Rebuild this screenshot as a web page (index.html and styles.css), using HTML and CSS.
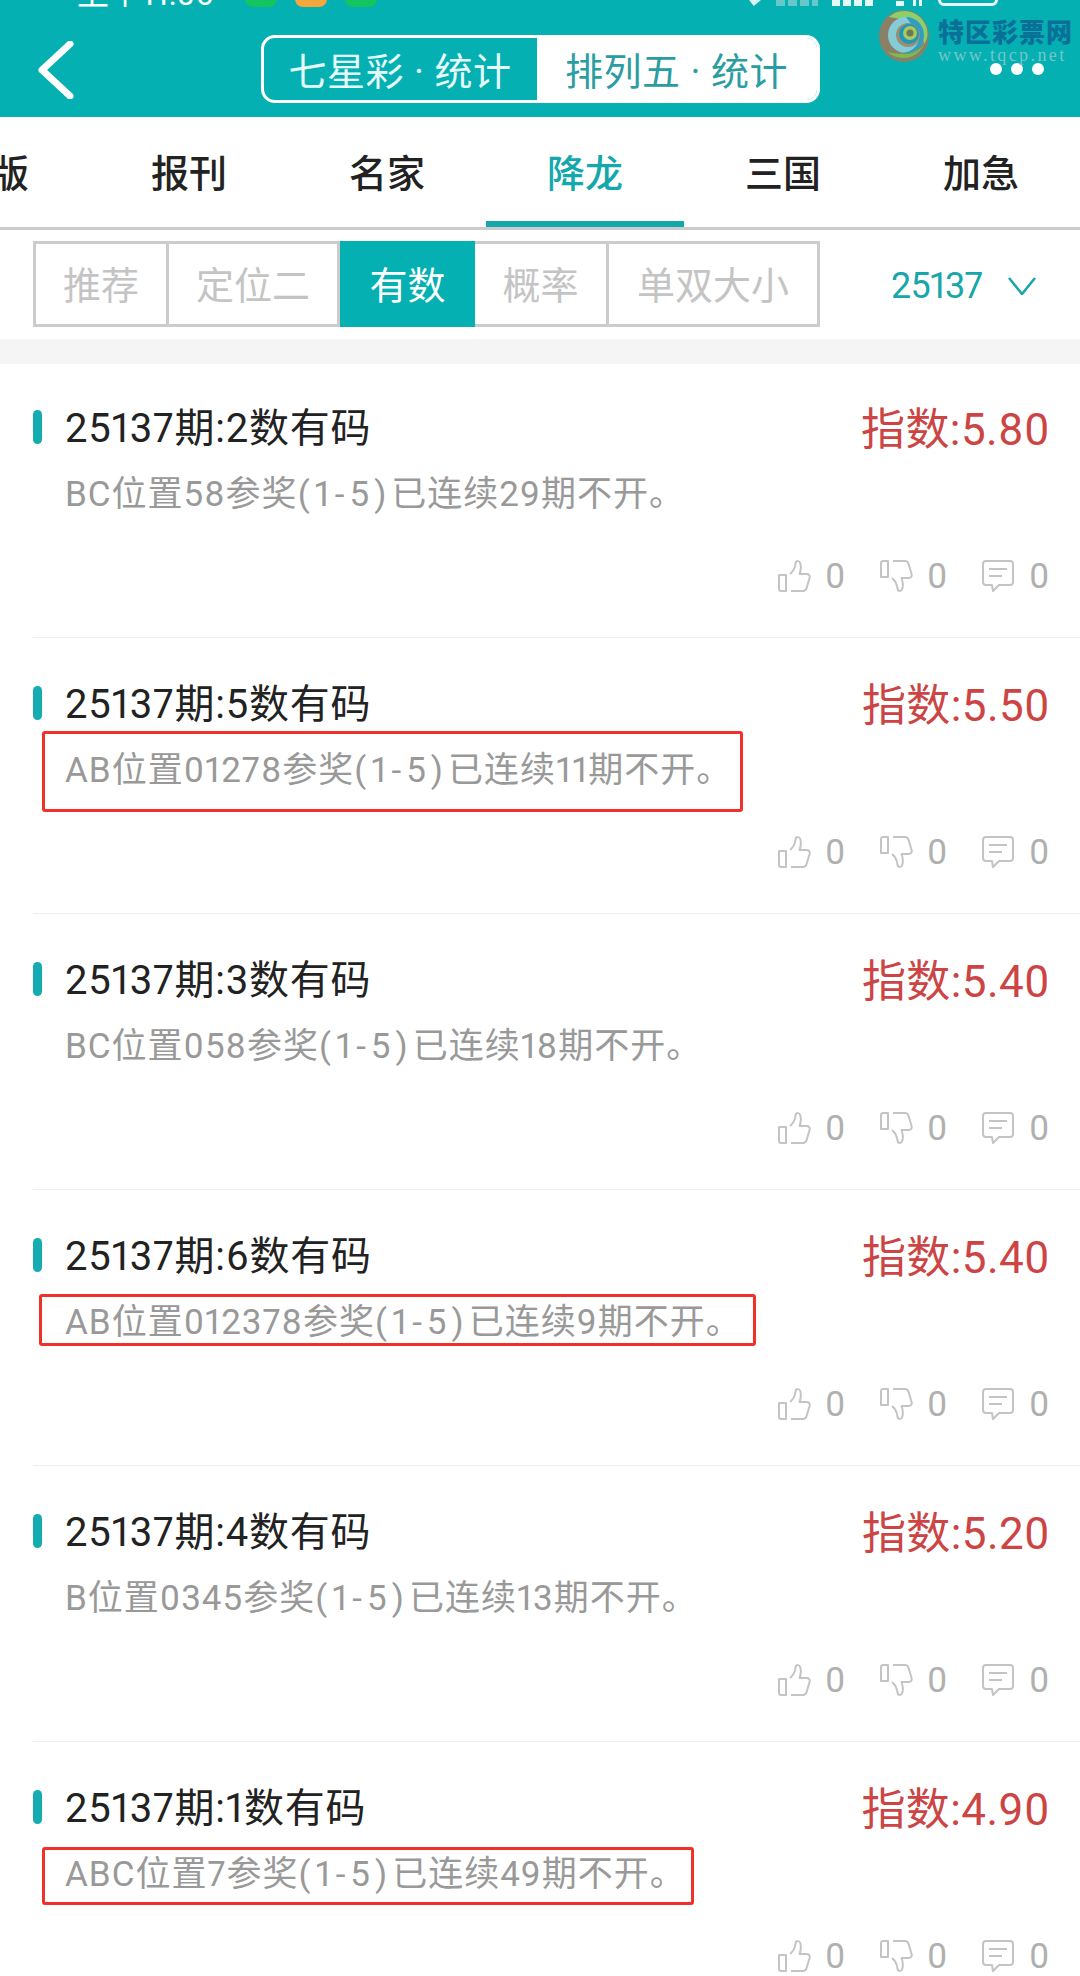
FILE: index.html
```html
<!DOCTYPE html>
<html lang="zh">

<head>
  <meta charset="UTF-8">
  <title>降龙 - 有数</title>
  <link rel="stylesheet" href="styles.css">
</head>

<body>

  <svg class="defs" width="0" height="0">
    <symbol id="icoLike" viewBox="0 0 34 34">
      <path d="M2 16h7v16H4a2 2 0 0 1-2-2z" />
      <path d="M14 32h12c2 0 3-1 3.600-3l3-10c.6-2.400-.8-4-3-4h-7c1.400-4 1.600-8 .6-11-.8-2.400-4.200-2.600-4.600 0-.4 4-2 8-5.600 11" />
    </symbol>
    <symbol id="icoComment" viewBox="0 0 34 34">
      <path d="M5 2h24a3 3 0 0 1 3 3v18a3 3 0 0 1-3 3H18l-6 6-1-6H5a3 3 0 0 1-3-3V5a3 3 0 0 1 3-3z" />
      <path d="M8 10h18M8 17h13" />
    </symbol>
    <symbol id="icoThumbDown" viewBox="0 0 34 34">
      <g transform="matrix(1 0 0 -1 0 34)">
        <use href="#icoLike" width="34" height="34" />
      </g>
    </symbol>
  </svg>

  <div id="root">
    <header class="top">
      <div class="status">
        <span class="time">上午11:06</span>
        <i class="app-dot green"></i>
        <i class="app-dot orange"></i>
        <i class="app-dot green"></i>
        <span class="status-right">
          <i class="st-nav"></i>
          <i class="st-dim"></i>
          <i class="st-bars"></i>
          <i class="st-wifi"></i>
          <i class="st-batt"></i>
        </span>
      </div>
      <nav class="nav">
        <svg class="back" viewBox="0 0 38 58">
          <path d="M33 3 5 29l28 26" />
        </svg>
        <div class="switch">
          <div class="switch-on">七星彩 · 统计</div>
          <div class="switch-off">排列五 · 统计</div>
        </div>
        <div class="more"><i></i><i></i><i></i></div>
      </nav>
      <!-- 水印 -->
      <div class="logo">
        <svg class="logo-mark" viewBox="0 0 50 52">
          <ellipse cx="25" cy="26" rx="25" ry="26" fill="#8a8068" />
          <path d="M10 7C20-3 40-1 47 16 50 24 48 30 45 34 44 20 34 10 22 9z" fill="#8fcf6a" />
          <path d="M8 42c12 10 32 8 38-10-3 6-10 12-20 12-7 0-13-1-18-2z" fill="#7dbb4e" />
          <circle cx="27" cy="25" r="18" fill="#86ccd6" />
          <path d="M27 7c10 0 18 8 18 18 0 12-10 20-22 18 12-1 18-10 17-18z" fill="#2f9fc0" />
          <circle cx="29" cy="25" r="12" fill="#9a8f70" />
          <circle cx="30" cy="24" r="10" fill="#1f97b8" />
          <circle cx="31" cy="23" r="7" fill="#a8c860" />
          <circle cx="31" cy="23" r="3.500" fill="#6b7a55" />
        </svg>
        <div class="logo-text">
          <b>特区彩票网</b>
          <span>www.tqcp.net</span>
        </div>
      </div>
    </header>

    <div class="tabs">
      <div class="tab">图版</div>
      <div class="tab">报刊</div>
      <div class="tab">名家</div>
      <div class="tab active">降龙</div>
      <div class="tab">三国</div>
      <div class="tab">加急</div>
    </div>

    <div class="filter">
      <div class="seg">
        <div class="seg-a">推荐</div>
        <div class="seg-b">定位二</div>
        <div class="seg-c active">有数</div>
        <div class="seg-d">概率</div>
        <div class="seg-e">单双大小</div>
      </div>
      <div class="period">
        <span>25137</span>
        <svg viewBox="0 0 28 18">
          <path d="M1 1l13 16L27 1" />
        </svg>
      </div>
    </div>

    <div class="strip"></div>

    <section class="list">
      <article class="row">
        <div class="head">
          <h3>25137期:2数有码</h3>
          <strong>指数:5.80</strong>
        </div>
        <p class="desc">BC位置58参奖<span>(1-5)</span>已连续29期不开。</p>
        <div class="acts">
          <svg><use href="#icoLike" /></svg><span>0</span>
          <svg><use href="#icoThumbDown" /></svg><span>0</span>
          <svg><use href="#icoComment" /></svg><span>0</span>
        </div>
      </article>

      <article class="row">
        <div class="head">
          <h3>25137期:5数有码</h3>
          <strong>指数:5.50</strong>
        </div>
        <p class="desc">AB位置01278参奖<span>(1-5)</span>已连续11期不开。</p>
        <div class="acts">
          <svg><use href="#icoLike" /></svg><span>0</span>
          <svg><use href="#icoThumbDown" /></svg><span>0</span>
          <svg><use href="#icoComment" /></svg><span>0</span>
        </div>
        <div class="redbox box-a"></div>
      </article>

      <article class="row">
        <div class="head">
          <h3>25137期:3数有码</h3>
          <strong>指数:5.40</strong>
        </div>
        <p class="desc">BC位置058参奖<span>(1-5)</span>已连续18期不开。</p>
        <div class="acts">
          <svg><use href="#icoLike" /></svg><span>0</span>
          <svg><use href="#icoThumbDown" /></svg><span>0</span>
          <svg><use href="#icoComment" /></svg><span>0</span>
        </div>
      </article>

      <article class="row">
        <div class="head">
          <h3>25137期:6数有码</h3>
          <strong>指数:5.40</strong>
        </div>
        <p class="desc">AB位置012378参奖<span>(1-5)</span>已连续9期不开。</p>
        <div class="acts">
          <svg><use href="#icoLike" /></svg><span>0</span>
          <svg><use href="#icoThumbDown" /></svg><span>0</span>
          <svg><use href="#icoComment" /></svg><span>0</span>
        </div>
        <div class="redbox box-b"></div>
      </article>

      <article class="row">
        <div class="head">
          <h3>25137期:4数有码</h3>
          <strong>指数:5.20</strong>
        </div>
        <p class="desc">B位置0345参奖<span>(1-5)</span>已连续13期不开。</p>
        <div class="acts">
          <svg><use href="#icoLike" /></svg><span>0</span>
          <svg><use href="#icoThumbDown" /></svg><span>0</span>
          <svg><use href="#icoComment" /></svg><span>0</span>
        </div>
      </article>

      <article class="row">
        <div class="head">
          <h3>25137期:1数有码</h3>
          <strong>指数:4.90</strong>
        </div>
        <p class="desc">ABC位置7参奖<span>(1-5)</span>已连续49期不开。</p>
        <div class="acts">
          <svg><use href="#icoLike" /></svg><span>0</span>
          <svg><use href="#icoThumbDown" /></svg><span>0</span>
          <svg><use href="#icoComment" /></svg><span>0</span>
        </div>
        <div class="redbox box-c"></div>
      </article>
    </section>
  </div>

</body>

</html>
```

FILE: styles.css
```css
* {
  box-sizing: border-box;
}

html,
body {
  margin: 0;
  height: 1976px;
  overflow: hidden;
  background-color: #fff;
}

body {
  font-family: Roboto, "Noto Sans CJK SC", sans-serif;
  font-variant-numeric: proportional-nums;
}

.defs {
  position: absolute;
}

#root {
  width: 1080px;
  height: 1976px;
  overflow: hidden;
}

/* 顶部 */
.top {
  position: relative;
  height: 117px;
  background-color: #05b0b3;
}

.status {
  display: flex;
  align-items: flex-end;
  height: 7px;
  padding-left: 77px;
  overflow: hidden;
  color: #fff;
}

.time {
  width: 168px;
  flex: none;
  font-size: 32px;
  line-height: 26px;
}

.app-dot {
  flex: none;
  width: 32px;
  height: 24px;
  margin-right: 18px;
  border-radius: 8px;
}

.app-dot.green {
  background-color: #13c45f;
}

.app-dot.orange {
  background-color: #f5a63c;
}

.status-right {
  display: flex;
  align-items: flex-end;
  margin-left: auto;
  margin-right: 82px;
  padding-bottom: 1px;
}

.status-right i {
  display: block;
  flex: none;
  height: 20px;
}

.st-nav {
  width: 12px;
  margin-right: 15px;
  background-color: #d8f4f4;
  clip-path: polygon(0 70%, 100% 70%, 40% 100%);
}

.st-dim {
  width: 42px;
  margin-right: 14px;
  background: repeating-linear-gradient(90deg, #66c8ca 0 9px, transparent 9px 12px);
}

.st-bars {
  width: 42px;
  margin-right: 22px;
  background: repeating-linear-gradient(90deg, #e6f8f8 0 8px, transparent 8px 11px);
}

.st-wifi {
  width: 28px;
  margin-right: 14px;
  background:
    linear-gradient(#e6f8f8, #e6f8f8) 0 100% / 8px 5px no-repeat,
    linear-gradient(#e6f8f8, #e6f8f8) 17px 100% / 3px 20px no-repeat,
    linear-gradient(#e6f8f8, #e6f8f8) 23px 100% / 3px 20px no-repeat;
}

.st-batt {
  width: 60px;
  border: 3px solid #e6f8f8;
  border-radius: 6px;
}

.nav {
  display: flex;
  justify-content: center;
  height: 68px;
  margin-top: 28px;
}

.back {
  position: absolute;
  left: 37px;
  top: 41px;
  width: 38px;
  height: 58px;
  fill: none;
  stroke: #fff;
  stroke-width: 7;
  stroke-linecap: round;
  stroke-linejoin: round;
}

.switch {
  display: flex;
  width: 559px;
  height: 68px;
  border: 3px solid #fff;
  border-radius: 14px;
  overflow: hidden;
  font-size: 38px;
  letter-spacing: .5px;
  line-height: 68px;
  text-align: center;
}

.switch-on {
  width: 273px;
  color: #e6fbfb;
}

.switch-off {
  flex: 1;
  background-color: #fff;
  color: #2a9da2;
}

.more {
  position: absolute;
  left: 990px;
  top: 63px;
  display: flex;
  gap: 9px;
}

.more i {
  display: block;
  width: 12px;
  height: 12px;
  border-radius: 50%;
  background-color: #fff;
}

.logo {
  position: absolute;
  left: 879px;
  top: 10px;
  display: flex;
  gap: 9px;
}

.logo-mark {
  width: 50px;
  height: 52px;
}

.logo-text {
  display: flex;
  flex-direction: column;
  padding-top: 6px;
}

.logo-text b {
  font-family: "Noto Sans CJK SC", sans-serif;
  font-size: 26px;
  font-weight: 900;
  line-height: 30px;
  letter-spacing: 1px;
  color: #0b7098;
}

.logo-text span {
  font-family: "Liberation Serif", serif;
  font-size: 18px;
  line-height: 18px;
  letter-spacing: 2.400px;
  white-space: nowrap;
  color: #74c6c8;
}

/* 分类 */
.tabs {
  display: flex;
  height: 113px;
  margin-left: -108px;
  width: 1188px;
  border-bottom: 3px solid #ccc;
}

.tab {
  width: 198px;
  height: 110px;
  flex: none;
  padding-top: 36px;
  font-size: 38px;
  font-weight: 500;
  line-height: 42px;
  text-align: center;
  color: #222;
}

.tab.active {
  color: #14a8ad;
  border-bottom: 6px solid #14a8ad;
}

/* 筛选 */
.filter {
  display: flex;
  align-items: center;
  height: 109px;
  padding: 11px 0 12px 33px;
}

.seg {
  display: flex;
  width: 787px;
  height: 86px;
  border: 3px solid #ccc;
  font-size: 38px;
  line-height: 84px;
  text-align: center;
  color: #c4c4c4;
}

.seg div {
  border-right: 3px solid #ccc;
}

.seg-a {
  width: 133px;
}

.seg-b {
  width: 171px;
}

.seg-c {
  width: 135px;
}

.seg-d {
  width: 134px;
}

.seg-e {
  flex: 1;
  border-right: none !important;
}

.seg .active {
  margin: -3px 0;
  height: 86px;
  border: none;
  line-height: 90px;
  background-color: #05b0b3;
  color: #fff;
}

.period {
  display: flex;
  align-items: center;
  margin-left: 71px;
  padding-top: 4px;
  gap: 26px;
  font-size: 36px;
  letter-spacing: -.7px;
  color: #17a6a9;
}

.period svg {
  width: 28px;
  height: 18px;
  fill: none;
  stroke: #17a6a9;
  stroke-width: 2.500;
}

.strip {
  height: 25px;
  background-color: #f5f5f5;
}

/* 列表 */
.row {
  position: relative;
  height: 276px;
  margin-left: 33px;
  padding: 44px 31px 0 32px;
  border-bottom: 1px solid #eee;
}

.row:first-child {
  height: 274px;
  padding-top: 42px;
}

.row::before {
  content: "";
  position: absolute;
  left: 0;
  top: 48px;
  width: 9px;
  height: 34px;
  border-radius: 5px;
  background-color: #14acb0;
}

.row:first-child::before {
  top: 46px;
}

.head {
  display: flex;
  justify-content: space-between;
  height: 46px;
  line-height: 46px;
}

.head h3 {
  margin: 0;
  font-size: 40px;
  font-weight: 400;
  letter-spacing: .8px;
  color: #222;
}

.head strong {
  margin: 1px -1px 0 0;
  font-size: 44px;
  font-weight: 400;
  letter-spacing: .4px;
  color: #cc4444;
}

.desc {
  margin: 20px 0 0;
  font-size: 35px;
  letter-spacing: 1px;
  line-height: 46px;
  color: #999;
}

/* 括号内的数字间距更宽 */
.desc span {
  letter-spacing: 5px;
}

.acts {
  display: flex;
  justify-content: flex-end;
  align-items: center;
  height: 40px;
  margin-top: 38px;
  font-size: 35px;
  color: #b0b0b0;
}

.acts svg {
  width: 34px;
  height: 34px;
  fill: none;
  stroke: #c4c4c4;
  stroke-width: 2;
  stroke-linejoin: round;
}

.acts span {
  width: 20px;
  margin-left: 14px;
  text-align: right;
}

.acts span:not(:last-child) {
  margin-right: 34px;
}

/* 红框标注 */
.redbox {
  position: absolute;
  border: 3px solid #f2302a;
  border-radius: 3px;
}

.box-a {
  left: 9px;
  top: 93px;
  width: 701px;
  height: 81px;
}

.box-b {
  left: 6px;
  top: 104px;
  width: 717px;
  height: 52px;
}

.box-c {
  left: 9px;
  top: 105px;
  width: 652px;
  height: 58px;
}
```
